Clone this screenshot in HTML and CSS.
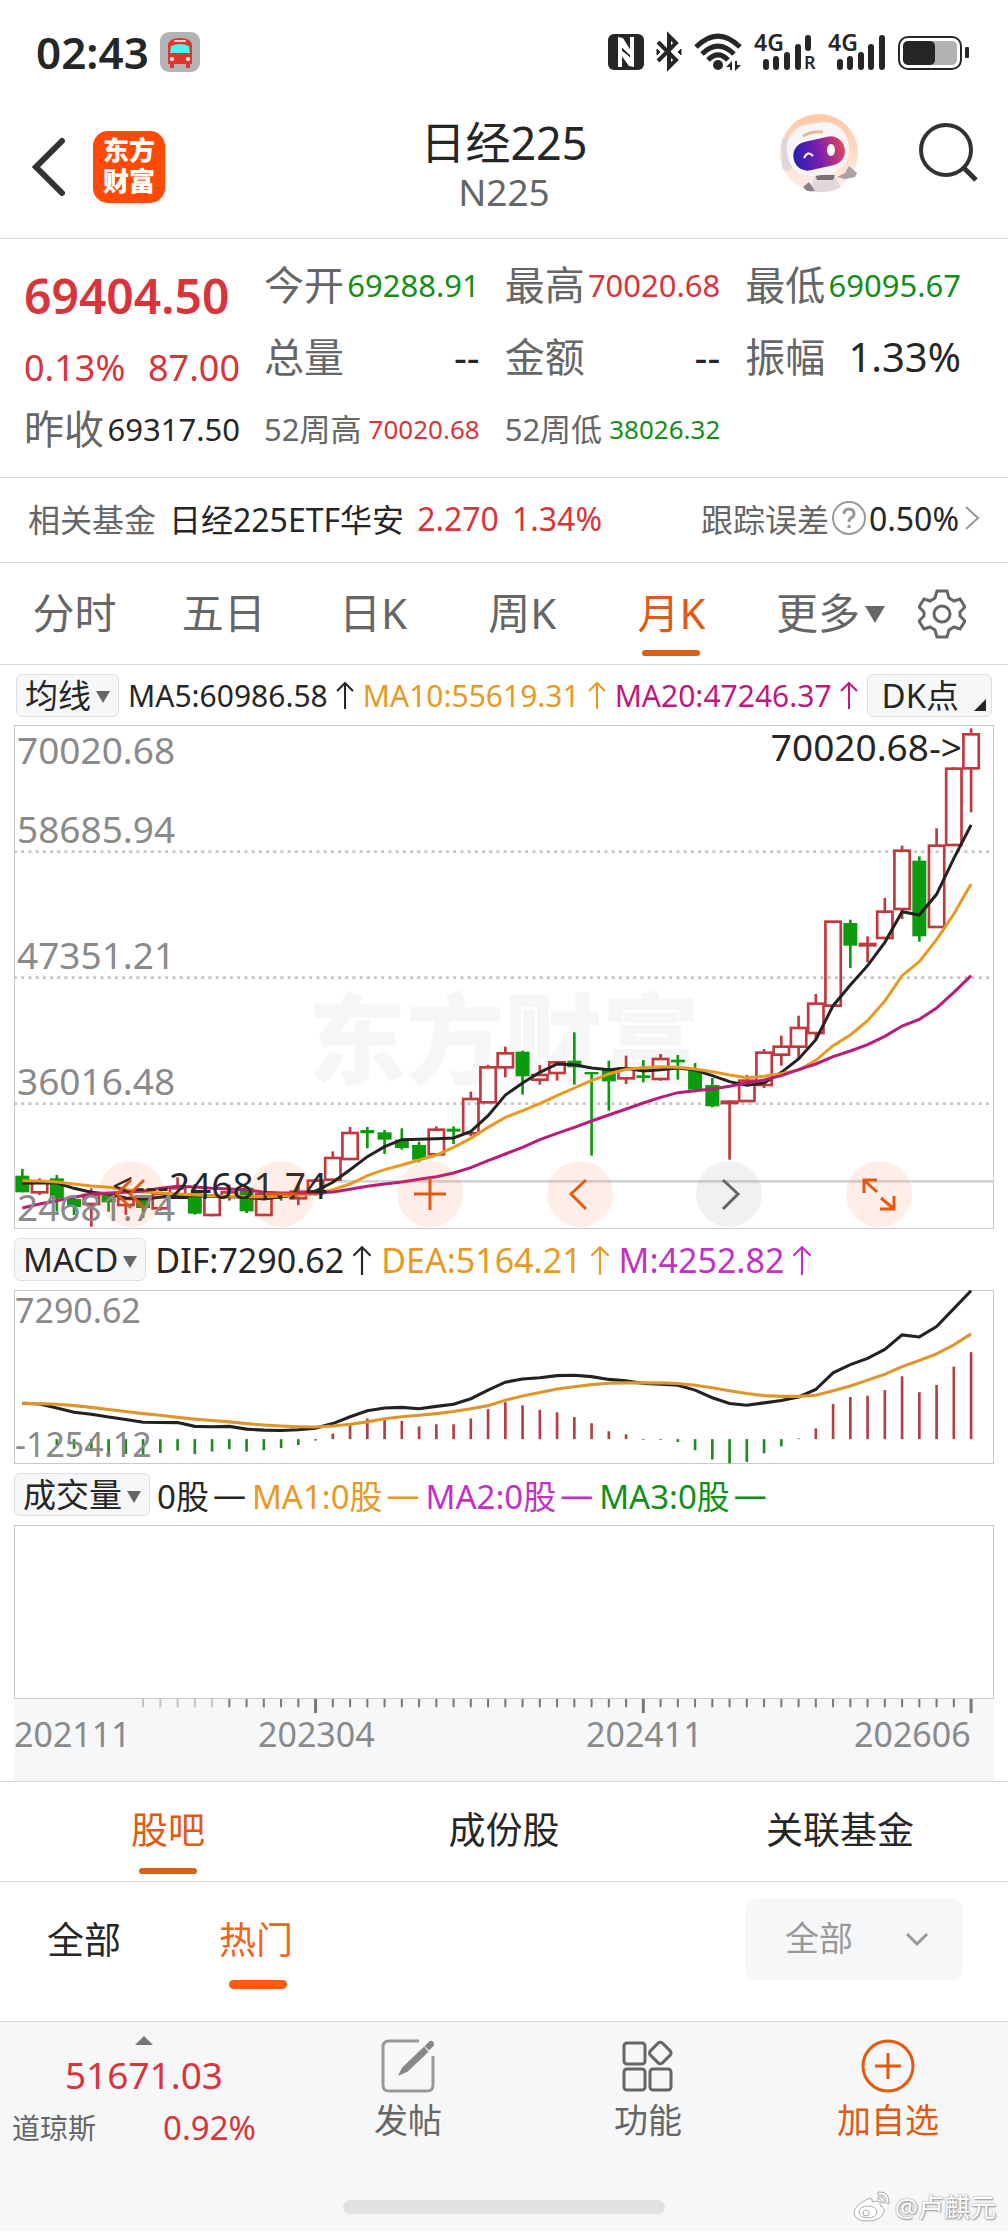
FILE: index.html
```html
<!DOCTYPE html>
<html lang="zh-CN">

<head>
    <meta charset="UTF-8">
    <meta name="viewport" content="width=device-width, initial-scale=1.0">
    <title>日经225 N225</title>
    <link rel="stylesheet" href="styles.css">
</head>

<body>
    <!-- arrow shared by the indicator rows -->
    <svg class="defs" aria-hidden="true">
        <symbol id="up" viewBox="0 0 18 28">
            <path d="M9 28V2M1 10L9 2L17 10" fill="none" stroke="currentColor" stroke-width="2" />
        </symbol>
    </svg>

    <div class="status-bar">
        <span class="time">02:43</span>
        <svg class="bus" viewBox="0 0 40 40">
            <rect width="40" height="40" rx="9" fill="#b3b3b5" />
            <path d="M8 14Q8 6 20 6Q32 6 32 14V32H8Z" fill="#e0352f" />
            <rect x="10" y="31" width="4" height="5" rx="1" fill="#e0352f" />
            <rect x="26" y="31" width="4" height="5" rx="1" fill="#e0352f" />
            <path d="M11 14Q20 10 29 14L30 21H10Z" fill="#4cf3ee" />
            <rect x="14" y="8" width="12" height="2" rx="1" fill="#f7c9c4" />
            <circle cx="12" cy="27" r="2" fill="#fff" />
            <circle cx="28" cy="27" r="2" fill="#fff" />
        </svg>
        <div class="status-icons">
            <svg width="36" height="38" viewBox="0 0 36 38">
                <rect y="1" width="36" height="36" rx="6" fill="#262626" />
                <path d="M10 34V4L15 5L23 18V23L14 15V34ZM26 4V34L21 33L13 22V17L22 24V4Z" fill="#fff" />
                <path d="M14 15L22 24" stroke="#262626" stroke-width="1" />
            </svg>
            <svg width="26" height="38" viewBox="0 0 26 38" fill="none" stroke="#262626" stroke-width="4">
                <path d="M2 9L20 27L13 34V3L20 10L2 28" />
                <path d="M1 16L4 19L1 22ZM25 16L22 19L25 22Z" fill="#262626" stroke-width="1" />
            </svg>
            <svg width="48" height="38" viewBox="0 0 48 38" fill="none" stroke="#262626" stroke-width="5">
                <path d="M2 14Q24 -8 46 14M8 21Q24 5 40 21M14 27Q24 17 34 27" />
                <circle cx="24" cy="32" r="5" fill="#262626" stroke="none" />
                <path d="M32 34L38 28V37H36V34ZM47 32L41 38V28H43V32Z" fill="#262626" stroke="none" />
            </svg>
            <svg width="62" height="38" viewBox="0 0 62 38">
                <text x="0" y="18" class="net">4G</text>
                <path d="M12 29V34M22 26V34M33 22V34M44 14V34M54 5V15" stroke="#262626" stroke-width="6" stroke-linecap="round" />
                <text x="50" y="36" class="net roam">R</text>
            </svg>
            <svg width="58" height="38" viewBox="0 0 58 38">
                <text x="0" y="18" class="net">4G</text>
                <path d="M12 29V34M22 26V34M33 22V34M43 14V34M54 5V34" stroke="#262626" stroke-width="6" stroke-linecap="round" />
            </svg>
            <svg width="72" height="38" viewBox="0 0 72 38">
                <rect x="1" y="4" width="62" height="32" rx="9" fill="#fff" stroke="#262626" stroke-width="2" />
                <rect x="5" y="8" width="54" height="24" rx="5" fill="#b2b2b2" />
                <rect x="5" y="8" width="32" height="24" rx="5" fill="#262626" />
                <rect x="67" y="14" width="4" height="11" rx="1" fill="#262626" />
            </svg>
        </div>
    </div>

    <header class="header">
        <div class="header-left">
            <button class="icon-btn" type="button" aria-label="返回">
                <svg width="36" height="60" viewBox="0 0 36 60">
                    <path d="M32 4L6 30L32 56" fill="none" stroke="#333" stroke-width="6" stroke-linecap="round" />
                </svg>
            </button>
            <a class="logo" href="#">东方<br>财富</a>
        </div>
        <div class="title">
            <h1>日经225</h1>
            <p>N225</p>
        </div>
        <div class="header-right">
            <button class="icon-btn" type="button" aria-label="智能助手">
                <svg width="80" height="80" viewBox="0 0 80 80">
                    <defs>
                        <linearGradient id="visor" x1="0" x2="1" y1="0" y2="0">
                            <stop offset="0" stop-color="#2a1fb4" />
                            <stop offset="0.5" stop-color="#7b1fae" />
                            <stop offset="1" stop-color="#e2465c" />
                        </linearGradient>
                        <linearGradient id="halo" x1="0" x2="0" y1="0" y2="1">
                            <stop offset="0" stop-color="#ffc7a6" />
                            <stop offset="1" stop-color="#fff1e8" />
                        </linearGradient>
                    </defs>
                    <circle cx="40" cy="40" r="39" fill="url(#halo)" />
                    <path d="M30 79L35 64H56L62 74Q52 80 40 79Z" fill="#e0d8dc" />
                    <path d="M24 74L30 69L36 78L28 78Z" fill="#8d8186" />
                    <path d="M36 62H56L54 67H38Z" fill="#7d7277" />
                    <path d="M58 64L66 60L70 53L78 60L76 64L66 66Z" fill="#a9a1a6" />
                    <rect x="3" y="24" width="10" height="34" rx="5" fill="#ddd6da" />
                    <rect x="8" y="10" width="62" height="52" rx="24" fill="#f7f5f6" transform="rotate(-9 40 37)" />
                    <rect x="14" y="26" width="52" height="29" rx="14" fill="url(#visor)" transform="rotate(-13 40 40)" />
                    <path d="M25 45Q29 37 34 43" fill="none" stroke="#fff" stroke-width="2" />
                    <ellipse cx="52" cy="37" rx="4" ry="6" fill="#fff" />
                    <path d="M24 23Q34 18 44 19" stroke="#e0bd98" stroke-width="3" fill="none" />
                </svg>
            </button>
            <button class="icon-btn" type="button" aria-label="搜索">
                <svg width="60" height="60" viewBox="0 0 60 60" fill="none" stroke="#333">
                    <circle cx="28" cy="27" r="25" stroke-width="4" />
                    <path d="M46 45L58 57" stroke-width="5" />
                </svg>
            </button>
        </div>
    </header>

    <main>
        <section class="quote">
            <div class="quote-main">
                <div class="price">69404.50</div>
                <div class="change"><span>0.13%</span><span>87.00</span></div>
                <div class="prev"><span class="label">昨收</span><span>69317.50</span></div>
            </div>
            <div class="quote-grid">
                <div class="cell"><span class="label">今开</span><span class="down">69288.91</span></div>
                <div class="cell"><span class="label">最高</span><span class="rise">70020.68</span></div>
                <div class="cell"><span class="label">最低</span><span class="down">69095.67</span></div>
                <div class="cell"><span class="label">总量</span><span class="big">--</span></div>
                <div class="cell"><span class="label">金额</span><span class="big">--</span></div>
                <div class="cell"><span class="label">振幅</span><span class="big">1.33%</span></div>
                <div class="cell small"><span class="label">52周高</span><span class="rise">70020.68</span></div>
                <div class="cell small"><span class="label">52周低</span><span class="down">38026.32</span></div>
            </div>
        </section>

        <a class="fund" href="#">
            <span class="fund-label">相关基金</span>
            <span class="fund-name">日经225ETF华安</span>
            <span class="rise">2.270</span>
            <span class="rise">1.34%</span>
            <span class="fund-error">
                <span class="fund-label">跟踪误差</span>
                <svg width="36" height="36" viewBox="0 0 36 36" fill="none" stroke="#999" stroke-width="2">
                    <circle cx="18" cy="18" r="16" />
                    <path d="M13 14Q13 9 18 9Q23 9 23 14Q23 17 20 18Q18 19 18 22M18 25V28" stroke-width="3" />
                </svg>
                <span>0.50%</span>
                <svg width="20" height="26" viewBox="0 0 20 26" fill="none" stroke="#999" stroke-width="2">
                    <path d="M5 2L17 13L5 24" />
                </svg>
            </span>
        </a>

        <nav class="periods">
            <button type="button">分时</button>
            <button type="button">五日</button>
            <button type="button">日K</button>
            <button type="button">周K</button>
            <button type="button" class="active">月K</button>
            <button type="button" class="more">更多<i class="caret"></i></button>
            <button type="button" class="gear" aria-label="设置">
                <svg width="48" height="50" viewBox="0 0 48 50" fill="none" stroke="#666" stroke-width="3">
                    <path d="M19 2H29L31 9L36 12L42 10L47 18L42 23V27L47 32L42 40L36 38L31 41L29 48H19L17 41L12 38L6 40L1 32L6 27V23L1 18L6 10L12 12L17 9Z" />
                    <circle cx="24" cy="25" r="8" />
                </svg>
            </button>
        </nav>

        <section class="charts">
            <div class="indicators ma">
                <button type="button" class="badge">均线<i class="caret"></i></button>
                <span>MA5:60986.58<svg><use href="#up" /></svg></span>
                <span class="orange">MA10:55619.31<svg><use href="#up" /></svg></span>
                <span class="magenta">MA20:47246.37<svg><use href="#up" /></svg></span>
                <button type="button" class="badge dk">DK点<i class="corner"></i></button>
            </div>
            <div class="panel kline">
                <div class="brand-mark">东方财富</div>
                <svg id="kline" class="plot" viewBox="42 -522 2940 1512" preserveAspectRatio="none"></svg>
                <div class="scale">
                    <span class="top">70020.68</span>
                    <span>58685.94</span>
                    <span>47351.21</span>
                    <span>36016.48</span>
                    <span>24681.74</span>
                </div>
                <span class="peak high">70020.68-&gt;</span>
                <span class="peak low">&lt;---24681.74</span>
                <div class="controls">
                    <button type="button" aria-label="最早"><svg viewBox="0 0 66 66"><path d="M33 19L19 33L33 47M46 19L32 33L46 47" /></svg></button>
                    <button type="button" aria-label="缩小"><svg viewBox="0 0 66 66"><path d="M17 33H49" /></svg></button>
                    <button type="button" aria-label="放大"><svg viewBox="0 0 66 66"><path d="M17 33H49M33 17V49" /></svg></button>
                    <button type="button" aria-label="左移"><svg viewBox="0 0 66 66"><path d="M39 19L24 33L39 48" /></svg></button>
                    <button type="button" aria-label="右移" class="off"><svg viewBox="0 0 66 66"><path d="M27 19L42 33L27 48" /></svg></button>
                    <button type="button" aria-label="全屏"><svg viewBox="0 0 66 66"><path d="M18 32V19H31M18 19L31 31M35 37L48 48M48 35V48H34" /></svg></button>
                </div>
            </div>

            <div class="indicators macd">
                <button type="button" class="badge">MACD<i class="caret"></i></button>
                <span>DIF:7290.62<svg><use href="#up" /></svg></span>
                <span class="orange">DEA:5164.21<svg><use href="#up" /></svg></span>
                <span class="purple">M:4252.82<svg><use href="#up" /></svg></span>
            </div>
            <div class="panel sub">
                <svg id="macd" class="plot" viewBox="42 180 2940 504" preserveAspectRatio="none"></svg>
                <div class="scale two">
                    <span class="top">7290.62</span>
                    <span>-1254.12</span>
                </div>
            </div>

            <div class="indicators volume">
                <button type="button" class="badge">成交量<i class="caret"></i></button>
                <span>0股<b>—</b></span>
                <span class="orange">MA1:0股<b>—</b></span>
                <span class="purple">MA2:0股<b>—</b></span>
                <span class="green">MA3:0股<b>—</b></span>
            </div>
            <div class="panel sub"></div>
            <div class="dates">
                <svg id="ticks" viewBox="42 0 2940 48" preserveAspectRatio="none"></svg>
                <span>202111</span>
                <span>202304</span>
                <span>202411</span>
                <span>202606</span>
            </div>
        </section>

        <nav class="tabs">
            <button type="button" class="active">股吧</button>
            <button type="button">成份股</button>
            <button type="button">关联基金</button>
        </nav>

        <div class="filter">
            <button type="button">全部</button>
            <button type="button" class="active">热门</button>
            <div class="select">
                <select aria-label="帖子筛选">
                    <option>全部</option>
                </select>
                <svg width="24" height="16" viewBox="0 0 24 16" fill="none" stroke="#999" stroke-width="3">
                    <path d="M2 3L12 13L22 3" />
                </svg>
            </div>
        </div>
    </main>

    <footer class="footer">
        <div class="bottom-nav">
            <a class="index" href="#">
                <i class="caret-up"></i>
                <strong>51671.03</strong>
                <span class="index-row"><span>道琼斯</span><em>0.92%</em></span>
            </a>
            <a class="item" href="#">
                <svg width="54" height="54" viewBox="0 0 54 54" fill="none" stroke="#999" stroke-width="3">
                    <path d="M38 2H8Q2 2 2 8V46Q2 52 8 52H46Q52 52 52 46V17" />
                    <path d="M19 35L22 29L43 9L46 13L26 32ZM45 7L49 3Q52 2 52 6L48 10Z" fill="#888" stroke="#888" stroke-width="2" />
                </svg>
                发帖
            </a>
            <a class="item" href="#">
                <svg width="54" height="54" viewBox="0 0 54 54" fill="none" stroke="#666" stroke-width="3">
                    <rect x="3" y="4" width="21" height="21" rx="3" />
                    <rect x="3" y="30" width="21" height="21" rx="3" />
                    <rect x="29" y="30" width="21" height="21" rx="3" />
                    <rect x="31" y="6" width="17" height="17" rx="3" transform="rotate(45 40 14)" />
                </svg>
                功能
            </a>
            <a class="item add" href="#">
                <svg width="54" height="54" viewBox="0 0 54 54" fill="none" stroke="#e8590c" stroke-width="3">
                    <circle cx="27" cy="27" r="25" />
                    <path d="M14 27H40M27 14V40" />
                </svg>
                加自选
            </a>
        </div>
        <div class="home-bar"></div>
        <div class="credit">
            <svg width="40" height="34" viewBox="0 0 40 34" fill="#fff" stroke="#aaa" stroke-width="1">
                <path d="M16 9Q4 14 2 22Q2 31 15 31Q29 31 32 22Q33 17 28 16Q30 9 20 12Q21 7 16 9Z" />
                <ellipse cx="16" cy="22" rx="9" ry="6" />
                <circle cx="14" cy="23" r="3" />
                <path d="M26 2Q38 1 37 14L34 13Q35 4 26 5ZM26 7Q33 6 32 13L29 12Q30 9 26 9Z" />
            </svg>
            @卢麒元
        </div>
    </footer>

    <script src="script.js"></script>
</body>

</html>
```
FILE: styles.css
```css
* {
    box-sizing: border-box;
    margin: 0;
    padding: 0;
}

body {
    font-family: "Noto Sans", "Noto Sans CJK SC", sans-serif;
    background-color: #fff;
    color: #262626;
    white-space: nowrap;
}

button {
    font: inherit;
    color: inherit;
    background: none;
    border: none;
    cursor: pointer;
}

a {
    color: inherit;
    text-decoration: none;
}

svg {
    display: block;
    flex: none;
}

.defs {
    position: absolute;
    width: 0;
    height: 0;
}

.rise {
    color: #d8343a;
}

.down {
    color: #128f16;
}

.orange {
    color: #e8991f;
}

.magenta {
    color: #c0187c;
}

.purple {
    color: #c231c6;
}

.green {
    color: #128f16;
}

.caret {
    margin-top: 4px;
    border: 7px solid transparent;
    border-top: 12px solid #666;
    border-bottom: none;
}

/* status bar */

.status-bar {
    display: flex;
    align-items: center;
    height: 104px;
    padding: 0 38px 0 36px;
}

.time {
    font-size: 44px;
    font-weight: 600;
    line-height: 104px;
}

.bus {
    width: 40px;
    height: 40px;
    margin-left: 11px;
}

.status-icons {
    display: flex;
    gap: 12px;
    margin-left: auto;
}

.status-icons svg {
    overflow: visible;
}

.net {
    font-size: 23px;
    font-weight: 600;
    fill: #262626;
}

.roam {
    font-size: 18px;
}

/* header */

.header {
    display: grid;
    grid-template-columns: 1fr auto 1fr;
    align-items: center;
    height: 135px;
    padding: 0 30px 8px 30px;
    border-bottom: 1px solid #d6d8da;
}

.header-left,
.header-right {
    display: flex;
    align-items: center;
}

.header-left {
    gap: 27px;
}

.header-right {
    gap: 59px;
    justify-content: flex-end;
    padding-bottom: 28px;
}

.logo {
    width: 72px;
    height: 72px;
    padding-top: 4px;
    border-radius: 15px;
    background-color: #ff4a05;
    color: #fff;
    font-size: 26px;
    font-weight: 900;
    line-height: 31px;
    text-align: center;
}

.title {
    text-align: center;
}

.title h1 {
    font-size: 45px;
    font-weight: 400;
    line-height: 50px;
}

.title p {
    font-size: 37px;
    line-height: 48px;
    color: #666;
}

/* quote */

.quote {
    display: flex;
    gap: 24px;
    padding: 0 47px 12px 24px;
    border-bottom: 1px solid #d6d8da;
}

.quote-main {
    width: 216px;
    padding-top: 25px;
    color: #d8343a;
}

.price {
    font-size: 48px;
    font-weight: 600;
    line-height: 64px;
}

.change {
    display: flex;
    justify-content: space-between;
    font-size: 36px;
    line-height: 80px;
}

.prev {
    display: flex;
    justify-content: space-between;
    font-size: 31px;
    line-height: 42px;
    color: #262626;
}

.label {
    font-size: 40px;
    color: #666;
}

.quote-grid {
    flex: 1;
    display: grid;
    grid-template-columns: repeat(3, 1fr);
    column-gap: 25px;
    padding-top: 10px;
}

.cell {
    display: flex;
    justify-content: space-between;
    font-size: 31px;
    line-height: 72px;
}

.cell .big {
    font-size: 40px;
}

.small {
    font-size: 26px;
}

.small .label {
    font-size: 31px;
}

/* related fund */

.fund {
    display: flex;
    align-items: center;
    gap: 13px;
    height: 85px;
    padding: 0 27px 4px 28px;
    border-bottom: 1px solid #d6d8da;
    font-size: 32px;
}

.fund-label {
    color: #666;
}

.fund-error {
    display: flex;
    align-items: center;
    gap: 2px;
    margin-left: auto;
}

/* period tabs */

.periods {
    display: grid;
    grid-template-columns: repeat(5, 1fr) auto auto;
    height: 102px;
    border-bottom: 1px solid #d6d8da;
    font-size: 42px;
    color: #666;
}

.periods button,
.tabs button {
    padding-bottom: 7px;
}

.periods .more {
    display: flex;
    align-items: center;
    gap: 5px;
    padding: 0 33px 7px 30px;
}

.periods .more .caret {
    margin-top: 8px;
    border-width: 17px 10px 0;
}

.periods .gear {
    padding-right: 42px;
    padding-bottom: 0;
}

.periods .active,
.tabs .active {
    position: relative;
    color: #e05a14;
}

.periods .active::after,
.tabs .active::after {
    content: "";
    position: absolute;
    left: 50%;
    bottom: 8px;
    width: 58px;
    height: 6px;
    margin-left: -29px;
    border-radius: 3px;
    background-color: #d9601a;
}

/* charts */

.charts {
    padding: 0 14px;
}

.indicators {
    display: flex;
    align-items: center;
    height: 61px;
    font-size: 33px;
}

.indicators > span {
    display: flex;
    align-items: center;
}

.indicators span svg {
    width: 20px;
    height: 30px;
    margin-left: 8px;
}

.ma {
    gap: 9px;
    height: 60px;
    padding: 0 2px;
    font-size: 30px;
}

.ma span svg {
    width: 18px;
    height: 28px;
}

.macd {
    gap: 9px;
    font-size: 34px;
}

.volume {
    gap: 2px;
}

.volume b {
    margin: 0 4px;
    font-weight: 400;
}

.badge {
    display: flex;
    align-items: center;
    gap: 5px;
    height: 43px;
    padding: 0 8px;
    border: 1px solid #dcdfe3;
    border-radius: 6px;
    background-color: #f6f7f9;
    font-size: 33px;
    line-height: 41px;
}

.volume .badge {
    margin-right: 5px;
}

.dk {
    position: relative;
    width: 128px;
    margin-left: auto;
    padding: 0 14px;
}

.corner {
    position: absolute;
    right: 5px;
    bottom: 5px;
    border-left: 12px solid transparent;
    border-bottom: 12px solid #262626;
}

.panel {
    position: relative;
    box-shadow: inset 0 0 0 1px #c8cacd;
}

.kline {
    height: 504px;
}

.sub {
    height: 174px;
}

.plot {
    position: relative;
    width: 100%;
    height: 100%;
}

.brand-mark {
    position: absolute;
    inset: 0;
    font-size: 98px;
    font-weight: 900;
    line-height: 626px;
    text-align: center;
    color: #f6f6f7;
}

.scale {
    position: absolute;
    inset: 0;
    display: grid;
    grid-template-rows: repeat(4, 1fr);
    align-items: end;
    padding-left: 3px;
    font-size: 37px;
    line-height: 44px;
    color: #8a8a8a;
}

.scale span {
    grid-column: 1;
}

.scale .top {
    grid-row: 1;
    align-self: start;
    padding-top: 3px;
}

.scale .top + span {
    grid-row: 1;
}

.two {
    grid-template-rows: 1fr;
    padding-left: 1px;
    font-size: 34px;
    line-height: 40px;
}

.two .top {
    padding-top: 0;
}

.peak {
    position: absolute;
    font-size: 37px;
    line-height: 44px;
}

.high {
    top: 0;
    right: 32px;
}

.low {
    left: 98px;
    bottom: 22px;
}

.controls {
    position: absolute;
    left: 84px;
    right: 82px;
    bottom: 2px;
    display: flex;
    justify-content: space-between;
}

.controls button {
    width: 66px;
    height: 66px;
    border-radius: 50%;
    background-color: rgba(255, 90, 20, 0.1);
}

.controls path {
    fill: none;
    stroke: #e05a14;
    stroke-width: 3;
}

.controls .off {
    background-color: rgba(60, 60, 70, 0.07);
}

.controls .off path {
    stroke: #666;
}

.dates {
    display: grid;
    grid-template-columns: 244fr 328fr 268fr 140fr;
    align-content: start;
    height: 82px;
    background-color: #f6f7f9;
    font-size: 34px;
    line-height: 38px;
    color: #8a8a8a;
}

.dates svg {
    grid-column: 1 / -1;
    width: 100%;
    height: 16px;
}

/* discussion tabs */

.tabs {
    display: grid;
    grid-template-columns: repeat(3, 1fr);
    height: 101px;
    border-top: 1px solid #d6d8da;
    border-bottom: 1px solid #d6d8da;
    font-size: 37px;
}

.tabs .active::after {
    bottom: 7px;
}

.filter {
    display: flex;
    align-items: flex-start;
    height: 139px;
    padding: 17px 45px 0 47px;
    font-size: 37px;
}

.filter button {
    height: 81px;
    padding-bottom: 3px;
    margin-right: 98px;
}

.filter .active {
    position: relative;
    color: #f0641e;
}

.filter .active::after {
    content: "";
    position: absolute;
    left: 50%;
    bottom: -9px;
    width: 58px;
    height: 9px;
    margin-left: -27px;
    border-radius: 5px;
    background-color: #ff5c0a;
}

.select {
    position: relative;
    width: 218px;
    margin-left: auto;
}

.select select {
    width: 100%;
    height: 81px;
    padding: 0 0 3px 40px;
    border: none;
    border-radius: 10px;
    background-color: #f6f7f9;
    font: inherit;
    font-size: 34px;
    color: #999;
    appearance: none;
}

.select svg {
    position: absolute;
    top: 32px;
    right: 34px;
    pointer-events: none;
}

/* bottom bar */

.footer {
    position: relative;
    height: 210px;
    border-top: 1px solid #d6d8da;
    background-color: #f6f7f9;
}

.bottom-nav {
    display: grid;
    grid-template-columns: 6fr 5fr 5fr 5fr;
    height: 178px;
}

.index {
    display: flex;
    flex-direction: column;
    align-items: center;
    padding-top: 14px;
    color: #666;
}

.caret-up {
    border: 9px solid transparent;
    border-top: none;
    border-bottom-color: #777;
}

.index strong {
    font-size: 37px;
    font-weight: 400;
    line-height: 60px;
    color: #d8343a;
}

.index-row {
    display: flex;
    align-items: center;
    justify-content: space-between;
    width: 100%;
    padding: 0 32px 0 12px;
    font-size: 28px;
    line-height: 46px;
}

.index-row em {
    font-size: 33px;
    font-style: normal;
    color: #d8343a;
}

.item {
    display: flex;
    flex-direction: column;
    align-items: center;
    padding-top: 17px;
    font-size: 34px;
    line-height: 54px;
    color: #666;
}

.add {
    color: #e05a14;
}

.home-bar {
    width: 322px;
    height: 14px;
    margin: 0 auto;
    border-radius: 7px;
    background-color: #e2e2e4;
}

.credit {
    position: absolute;
    right: 12px;
    bottom: 6px;
    display: flex;
    align-items: center;
    gap: 3px;
    font-size: 26px;
    line-height: 36px;
    color: #fff;
    text-shadow: 0 0 2px #888, 1px 1px 2px #999;
}
```
FILE: script.js
```js
// Chart coordinates are thirds of a pixel, so x = 67 + 51.75 * month
const FIRST = 67;
const STEP = 51.75;

const RED = '#c0393e';
const GREEN = '#0a9c0c';

// r = rise, g = fall; then body top, body bottom, wick top, wick bottom
const candles = [
    ['g', 832, 878, 810, 880], ['r', 850, 880, 838, 888], ['g', 840, 897, 828, 938], ['g', 902, 922, 890, 948],
    ['r', 888, 915, 868, 983], ['g', 890, 908, 885, 938], ['r', 900, 918, 895, 948], ['g', 897, 925, 890, 957],
    ['r', 885, 928, 878, 935], ['r', 868, 888, 835, 890], ['g', 885, 942, 855, 947], ['r', 890, 948, 885, 952],
    ['r', 880, 893, 857, 905], ['g', 868, 935, 862, 942], ['r', 885, 948, 880, 948], ['g', 882, 893, 880, 905],
    ['r', 878, 898, 850, 918], ['r', 845, 883, 842, 890], ['r', 777, 842, 757, 842], ['r', 702, 780, 684, 782],
    ['g', 695, 701, 684, 748], ['g', 702, 720, 693, 765], ['g', 724, 745, 688, 752], ['g', 740, 780, 728, 790],
    ['r', 692, 766, 682, 768], ['g', 691, 696, 682, 735], ['r', 600, 703, 578, 712], ['r', 505, 610, 497, 612],
    ['r', 463, 505, 443, 535], ['g', 460, 530, 455, 587], ['r', 528, 542, 498, 557], ['r', 490, 522, 487, 545],
    ['g', 487, 503, 400, 557], ['g', 521, 524, 520, 770], ['g', 515, 545, 485, 635], ['r', 508, 538, 470, 555],
    ['g', 531, 535, 483, 550], ['r', 480, 540, 465, 545], ['g', 484, 488, 468, 542], ['g', 512, 570, 492, 580],
    ['g', 560, 620, 537, 625], ['r', 608, 612, 605, 782], ['r', 545, 606, 528, 608], ['r', 461, 558, 450, 567],
    ['r', 443, 467, 410, 500], ['r', 387, 443, 350, 478], ['r', 314, 402, 285, 420], ['r', 68, 320, 68, 320],
    ['g', 74, 138, 62, 207], ['r', 135, 139, 112, 190], ['r', 38, 117, -3, 120], ['r', -145, 30, -160, 60],
    ['g', -113, 110, -128, 128], ['r', -160, 84, -212, 85], ['r', -391, -162, -395, -162], ['r', -494, -392, -512, -260]
];

const ma5 = [853, 852, 852, 868, 880, 885, 897, 900, 895, 888, 890, 892, 893, 895, 900, 893, 888, 876, 850, 812, 773, 743, 722, 721, 719, 717, 697, 650, 588, 552, 520, 495, 497, 507, 512, 508, 516, 512, 507, 513, 530, 548, 559, 552, 520, 480, 422, 320, 258, 200, 130, 38, 48, -14, -122, -222];
const ma10 = [845, 846, 849, 855, 861, 865, 872, 878, 882, 885, 888, 890, 892, 893, 893, 891, 888, 884, 872, 855, 830, 812, 798, 783, 768, 745, 718, 685, 655, 635, 614, 590, 567, 545, 525, 511, 506, 503, 505, 510, 518, 528, 536, 532, 524, 513, 484, 440, 408, 365, 306, 230, 188, 122, 45, -45];
const ma20 = [927, 915, 905, 895, 885, 882, 880, 876, 868, 862, 864, 868, 870, 872, 880, 882, 882, 882, 879, 871, 862, 855, 849, 841, 833, 822, 806, 785, 765, 745, 722, 703, 685, 666, 648, 630, 612, 595, 581, 575, 570, 562, 552, 543, 530, 512, 495, 473, 456, 437, 412, 381, 361, 327, 280, 230];

const dif = [508, 510, 522, 534, 540, 548, 555, 563, 564, 564, 575, 576, 575, 583, 586, 587, 585, 580, 567, 547, 530, 522, 520, 524, 517, 511, 495, 470, 447, 438, 434, 428, 427, 431, 439, 443, 451, 453, 456, 470, 492, 509, 514, 507, 500, 490, 468, 420, 396, 378, 352, 310, 316, 286, 234, 182];
const dea = [508, 509, 511, 515, 520, 526, 532, 538, 543, 549, 554, 558, 562, 567, 571, 574, 576, 577, 574, 569, 562, 553, 547, 543, 538, 532, 524, 515, 499, 487, 477, 467, 460, 454, 450, 449, 449, 449, 451, 456, 463, 472, 480, 486, 488, 488, 485, 472, 458, 441, 424, 402, 384, 365, 339, 307];
const bars = [612, 612, 630, 640, 647, 655, 655, 660, 652, 645, 655, 648, 641, 648, 644, 638, 629, 616, 596, 570, 552, 556, 559, 575, 569, 569, 552, 525, 505, 514, 527, 534, 548, 566, 589, 598, 614, 614, 620, 644, 671, 682, 678, 653, 633, 610, 581, 510, 490, 486, 470, 430, 476, 455, 402, 360];

function x(i) {
    return FIRST + STEP * i;
}

function line(x1, y1, x2, y2, color, width, extra) {
    return `<line x1="${x1}" y1="${y1}" x2="${x2}" y2="${y2}" stroke="${color}" stroke-width="${width}" ${extra || ''}/>`;
}

function curve(values, color) {
    const points = values.map((y, i) => x(i) + ',' + y).join(' ');
    return `<polyline points="${points}" fill="none" stroke="${color}" stroke-width="9"/>`;
}

function candle([type, top, bottom, high, low], i) {
    const cx = x(i);
    if (type === 'g') {
        return line(cx, high, cx, low, GREEN, 8)
            + `<rect x="${cx - 21}" y="${top - 2}" width="42" height="${bottom - top + 4}" fill="${GREEN}"/>`;
    }
    return line(cx, high, cx, top, RED, 8) + line(cx, bottom, cx, low, RED, 8)
        + `<rect x="${cx - 23}" y="${top}" width="46" height="${bottom - top}" fill="none" stroke="${RED}" stroke-width="8"/>`;
}

// monthly candles
let html = [-142, 236, 614].map(y => line(42, y, 2982, y, '#c6c6c8', 8, 'stroke-dasharray="9 12.6"')).join('');
html += line(1000, 847, 2982, 847, '#d4d5d8', 8);
html += candles.map(candle).join('');
html += curve(ma5, '#222') + curve(ma10, '#e8991f') + curve(ma20, '#b81d78');
document.getElementById('kline').innerHTML = html;

// MACD
html = bars.map((y, i) => line(x(i), 612, x(i), y, y < 612 ? '#b04044' : '#1e8c22', 8)).join('');
html += curve(dif, '#222') + curve(dea, '#dd962c');
document.getElementById('macd').innerHTML = html;

// month ticks, longer at labelled months
html = '';
for (let i = 7; i < 56; i++) {
    const major = i === 17 || i === 36 || i === 55;
    html += line(x(i), 0, x(i), major ? 42 : 25, '#777', major ? 9 : 6, i < 12 ? 'opacity="0.4"' : '');
}
document.getElementById('ticks').innerHTML = html;
```
